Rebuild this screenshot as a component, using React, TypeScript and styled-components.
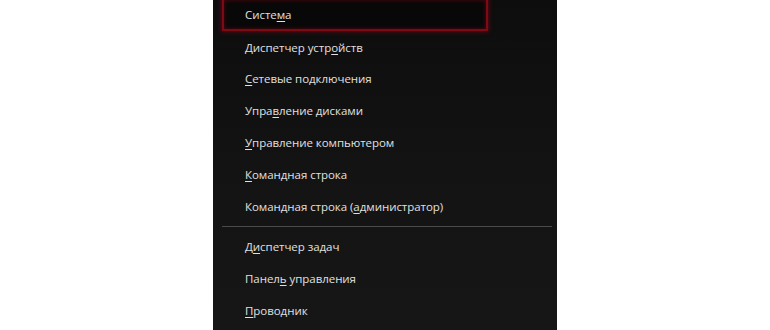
import styled, { createGlobalStyle } from "styled-components";

const Global = createGlobalStyle`
  html, body {
    margin: 0;
    padding: 0;
    background: #ffffff;
    height: 100%;
    overflow: hidden;
  }
  #root {
    height: 100%;
  }
`;

const Page = styled.div`
  display: flex;
  justify-content: center;
  height: 330px;
  font-family: "Open Sans", "Noto Sans", sans-serif;
`;

const Menu = styled.div`
  width: 344px;
  height: 332px;
  margin-top: -0.5px;
  background: linear-gradient(180deg, #0d0d0d 0%, #141414 60%, #161616 100%);
  box-sizing: border-box;
  padding: 0 5px 0 9px;
  display: flex;
  flex-direction: column;
`;

const Item = styled.div<{ $active?: boolean }>`
  display: flex;
  align-items: center;
  box-sizing: border-box;
  width: ${(p) => (p.$active ? "266px" : "auto")};
  padding-left: ${(p) => (p.$active ? "21px" : "23px")};
  margin-top: ${(p) => (p.$active ? "-2px" : "0")};
  height: ${(p) => (p.$active ? "33.8px" : "31.8px")};
  flex-shrink: 0;
  border: ${(p) => (p.$active ? "2px solid #7d0a14" : "none")};
  box-shadow: ${(p) =>
    p.$active
      ? "0 0 4px 1px rgba(140, 0, 20, 0.6), inset 0 0 4px rgba(140,0,20,0.6)"
      : "none"};
  background: ${(p) => (p.$active ? "#080808" : "transparent")};
  color: #e0e0e0;
  font-size: 11.5px;
  letter-spacing: -0.05px;
  white-space: pre;
`;

const Label = styled.span``;

const Key = styled.span`
  text-decoration: underline;
  text-underline-offset: 2px;
`;

const Separator = styled.div`
  height: 9px;
  flex-shrink: 0;
  display: flex;
  align-items: center;
  &::before {
    content: "";
    flex: 1;
    height: 1px;
    background: #4a4a4a;
  }
`;

const items: [string, string, string, boolean?][] = [
  ["Систе", "м", "а", true],
  ["Диспетчер устр", "о", "йств"],
  ["", "С", "етевые подключения"],
  ["Упра", "в", "ление дисками"],
  ["", "У", "правление компьютером"],
  ["", "К", "омандная строка"],
  ["Командная строка (", "а", "дминистратор)"],
];

const bottom: [string, string, string][] = [
  ["Д", "и", "спетчер задач"],
  ["Панел", "ь", " управления"],
  ["", "П", "роводник"],
];

export default function App() {
  return (
    <>
      <Global />
      <Page>
        <Menu>
          {items.map(([a, k, b, active], i) => (
            <Item key={i} $active={active}>
              <Label>
                {a}
                <Key>{k}</Key>
                {b}
              </Label>
            </Item>
          ))}
          <Separator />
          {bottom.map(([a, k, b], i) => (
            <Item key={i}>
              <Label>
                {a}
                <Key>{k}</Key>
                {b}
              </Label>
            </Item>
          ))}
        </Menu>
      </Page>
    </>
  );
}
